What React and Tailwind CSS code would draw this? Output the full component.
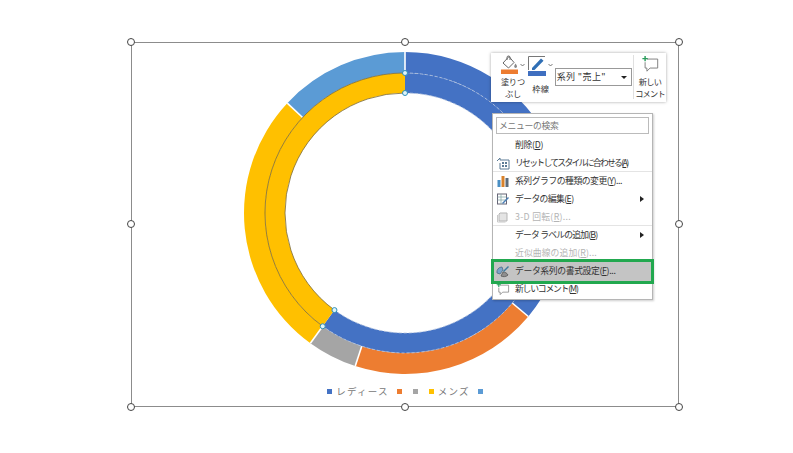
import React from 'react';

const polar = (r, deg) => {
  const a = ((deg - 90) * Math.PI) / 180;
  return [161 + r * Math.cos(a), 161 + r * Math.sin(a)];
};

// donut slice between two radii, angles clockwise from the top
const slice = (r0, r1, from, to) => {
  const [x1, y1] = polar(r1, from);
  const [x2, y2] = polar(r1, to);
  const [x3, y3] = polar(r0, to);
  const [x4, y4] = polar(r0, from);
  const large = to - from > 180 ? 1 : 0;
  return `M${x1} ${y1}A${r1} ${r1} 0 ${large} 1 ${x2} ${y2}L${x3} ${y3}A${r0} ${r0} 0 ${large} 0 ${x4} ${y4}Z`;
};

const arc = (r, from, to) => {
  const [x1, y1] = polar(r, from);
  const [x2, y2] = polar(r, to);
  return `M${x1} ${y1}A${r} ${r} 0 ${to - from > 180 ? 1 : 0} 1 ${x2} ${y2}`;
};

const outer = [
  { from: 0, to: 130, color: '#4472c4' },
  { from: 130, to: 198, color: '#ed7d31' },
  { from: 198, to: 216, color: '#a5a5a5' },
  { from: 216, to: 313, color: '#ffc000' },
  { from: 313, to: 360, color: '#5b9bd5' },
];

const Donut = () => (
  <svg width="322" height="322" viewBox="0 0 322 322" className="overflow-visible">
    {outer.map((s) => (
      <path key={s.from} d={slice(140, 161, s.from, s.to)} fill={s.color} />
    ))}
    {outer.map((s) => {
      const [x1, y1] = polar(140, s.from);
      const [x2, y2] = polar(161, s.from);
      return <line key={s.from} x1={x1} y1={y1} x2={x2} y2={y2} stroke="#fff" strokeWidth="1.6" />;
    })}
    <path d={slice(120, 140, 0, 216)} fill="#4472c4" />
    <path d={slice(120, 140, 216, 360)} fill="#ffc000" />
    <path d={arc(140, 0, 216)} fill="none" stroke="#b9c6de" strokeWidth="0.8" strokeDasharray="3 2" />
    <path d={arc(120, 0, 216)} fill="none" stroke="#b9c6de" strokeWidth="0.8" strokeDasharray="3 2" />
    <path d={arc(140, 216, 360)} fill="none" stroke="#7a6a3a" strokeWidth="0.8" />
    <path d={arc(120, 216, 360)} fill="none" stroke="#7a6a3a" strokeWidth="0.8" />
    {[[140, 0], [120, 0], [140, 216], [120, 216]].map(([r, d]) => {
      const [x, y] = polar(r, d);
      return <circle key={`${r}-${d}`} cx={x} cy={y} r="2.5" fill="#dff3fa" stroke="#2e8fb9" strokeWidth="1" />;
    })}
  </svg>
);

const Handle = ({ className }) => (
  <span className={`absolute w-[8px] h-[8px] rounded-full bg-white border border-[#444] ${className}`} />
);

const LegendItem = ({ color, label }) => (
  <div className="flex items-center gap-[4px]">
    <span className={`w-[5px] h-[5px] ${color}`} />
    {label && <span className="tracking-[1.2px] -mr-[3px]">{label}</span>}
  </div>
);

const Chevron = () => (
  <svg width="5" height="4" viewBox="0 0 5 4" className="shrink-0 mt-[8px]">
    <path d="m.5 1 2 2 2-2" fill="none" stroke="#555" strokeWidth="0.8" />
  </svg>
);

const FillIcon = () => (
  <svg width="20" height="20" viewBox="0 0 20 20">
    <path d="M9 1.500 3 8l5.500 5L14 7.500z" fill="#fff" stroke="#666" strokeWidth="1" />
    <path d="M7 5V2.500a1.500 1.500 0 0 1 3 0V5" fill="none" stroke="#666" strokeWidth="1" />
    <path d="M15.500 8.500c1 1.500 1.500 2.300 1.500 3a1.400 1.400 0 0 1-2.800 0c0-.7.500-1.500 1.300-3z" fill="#888" />
    <rect x="1" y="14.500" width="17" height="4.500" fill="#ed7d31" />
  </svg>
);

const BorderIcon = () => (
  <svg width="20" height="22" viewBox="0 0 20 22">
    <path d="M.5 15V1.500H17" fill="none" stroke="#777" strokeWidth="1" />
    <path d="M4 13 13 3.500l2.500 2.300L6.500 15H4z" fill="#2f6fb5" />
    <rect x="0" y="16" width="18" height="5" fill="#3f6fc0" />
  </svg>
);

const CommentIcon = ({ size = 20 }) => (
  <svg width={size} height={size} viewBox="0 0 20 20">
    <path d="M6 4.500h12v10H9.500L6 18v-3.500H4V8" fill="none" stroke="#777" strokeWidth="1" />
    <path d="M4 1v6M1 4h6" stroke="#2a9d5c" strokeWidth="1.600" />
  </svg>
);

const ResetIcon = () => (
  <svg width="14" height="14" viewBox="0 0 14 14">
    <path d="M1 5 4 2v2h9v9H4V7" fill="none" stroke="#5b7b95" strokeWidth="1" />
    <path d="M6 6h2v2H6zM9 6h2v2H9zM6 9h2v2H6zM9 9h2v2H9z" fill="#5b7b95" />
  </svg>
);

const BarsIcon = () => (
  <svg width="14" height="14" viewBox="0 0 14 14">
    <rect x="1.500" y="6" width="3" height="7" fill="#4a8fc4" />
    <rect x="5.500" y="2" width="3" height="11" fill="#d9822b" />
    <rect x="9.500" y="4" width="3" height="9" fill="#5d6b7a" />
  </svg>
);

const EditIcon = () => (
  <svg width="14" height="14" viewBox="0 0 14 14">
    <rect x="1.500" y="2" width="9" height="10" fill="none" stroke="#667" strokeWidth="1" />
    <path d="M1.500 5h9M1.500 8h9M5 2v10" stroke="#8aa" strokeWidth="0.800" />
    <path d="m6 11 6-6 1 1-6 6z" fill="#4a7fb5" />
  </svg>
);

const RotateIcon = () => (
  <svg width="14" height="14" viewBox="0 0 14 14">
    <path d="M4 3h7v8H3V4z" fill="#e4e4e4" stroke="#b5b5b5" strokeWidth="1" />
    <path d="M1.500 5v7h8" fill="none" stroke="#c8c8c8" strokeWidth="1" />
  </svg>
);

const FormatIcon = () => (
  <svg width="14" height="14" viewBox="0 0 14 14">
    <path d="M1 9a5 5 0 0 1 5-6l1 3-3 4z" fill="#7ba4c9" stroke="#4f6b85" strokeWidth="0.800" />
    <path d="M7 8c2 0 4 1 5 3-2 2-5 2-7 1z" fill="#8f8f8f" stroke="#555" strokeWidth="0.800" />
    <path d="m7 7 5-5 1 1-5 5z" fill="#3f7a9e" />
  </svg>
);

const menuRows = [
  { label: '削除(', key: 'D', end: ')', track: 'tracking-[-0.3px]' },
  { label: 'リセットしてスタイルに合わせる(', key: 'A', end: ')', icon: <ResetIcon />, line: true, track: 'tracking-[-1.7px]' },
  { label: '系列グラフの種類の変更(', key: 'Y', end: ')...', icon: <BarsIcon />, track: 'tracking-[-0.45px]' },
  { label: 'データの編集(', key: 'E', end: ')', icon: <EditIcon />, arrow: true, track: 'tracking-[-0.6px]' },
  { label: '3-D 回転(', key: 'R', end: ')...', icon: <RotateIcon />, off: true, line: true, track: 'tracking-[0.3px]' },
  { label: 'データ ラベルの追加(', key: 'B', end: ')', arrow: true, track: 'tracking-[-0.8px]' },
  { label: '近似曲線の追加(', key: 'R', end: ')...', off: true, track: 'tracking-[0.1px]' },
  { label: 'データ系列の書式設定(', key: 'F', end: ')...', icon: <FormatIcon />, active: true, track: 'tracking-[-0.35px]' },
  { label: '新しいコメント(', key: 'M', end: ')', icon: <CommentIcon size={14} />, track: 'tracking-[-1.2px]' },
];

const MenuRow = ({ row }) => (
  <div
    className={`flex items-center pr-[8px] ${row.off ? 'text-[#b4b4b4]' : 'text-[#333]'} ${
      row.active
        ? 'bg-[#c4c4c4] outline-[3px] outline-[#22a84f] -outline-offset-[1px] relative h-[21px] my-[-1.5px]'
        : 'h-[18px]'
    } ${row.line ? 'border-b border-[#e4e4e4]' : ''}`}
  >
    <span className="w-[19px] mr-[3px] flex justify-center shrink-0">{row.icon}</span>
    <span className={`whitespace-nowrap ${row.track}`}>
      {row.label}
      <span className="underline">{row.key}</span>
      {row.end}
    </span>
    {row.arrow && <span className="ml-auto w-0 h-0 border-y-[3px] border-y-transparent border-l-[4px] border-l-[#222]" />}
  </div>
);

export default function App() {
  return (
    <div className="w-[793px] h-[453px] bg-white relative overflow-hidden font-['Noto_Sans_CJK_JP','Liberation_Sans',sans-serif] pt-[42px] pl-[131px]">
      <div className="relative w-[548px] h-[365px] border border-[#8c8c8c] flex flex-col items-center pt-[9px]">
        <Donut />
        <div className="flex items-center gap-[11px] mt-[10px] text-[9.500px] leading-[14px] text-[#777]">
          <LegendItem color="bg-[#4472c4]" label="レディース" />
          <LegendItem color="bg-[#ed7d31]" />
          <LegendItem color="bg-[#a5a5a5]" />
          <LegendItem color="bg-[#ffc000]" label="メンズ" />
          <LegendItem color="bg-[#5b9bd5]" />
        </div>
        <Handle className="-left-[5px] -top-[5px]" />
        <Handle className="left-[269px] -top-[5px]" />
        <Handle className="-right-[5px] -top-[5px]" />
        <Handle className="-left-[5px] top-[177px]" />
        <Handle className="-right-[5px] top-[177px]" />
        <Handle className="-left-[5px] -bottom-[5px]" />
        <Handle className="left-[269px] -bottom-[5px]" />
        <Handle className="-right-[5px] -bottom-[5px]" />
      </div>

      {/* mini toolbar */}
      <div className="absolute left-[491px] top-[53px] w-[175px] h-[49px] bg-white shadow-[0_0_3px_rgba(0,0,0,0.35)] flex text-[8.200px] leading-[12px] text-[#333] pl-[7px] pt-[2px]">
        <div className="w-[30px] flex flex-col items-center">
          <div className="flex">
            <FillIcon />
            <Chevron />
          </div>
          <span className="text-center tracking-[-0.2px] whitespace-nowrap">塗りつ<br />ぶし</span>
        </div>
        <div className="w-[26px] flex flex-col items-center">
          <div className="flex">
            <BorderIcon />
            <Chevron />
          </div>
          <span className="mt-[5px] whitespace-nowrap tracking-[0.4px]">枠線</span>
        </div>
        <div className="w-[78px] h-[18px] mt-[13px] ml-[1px] border border-[#999] flex items-center justify-between pl-[1px] pr-[4px] whitespace-nowrap text-[9px]">
          <span className="tracking-[0.4px]">系列 "売上"</span>
          <span className="w-0 h-0 border-x-[3px] border-x-transparent border-t-[3px] border-t-[#222]" />
        </div>
        <div className="w-[33px] flex flex-col items-center border-l border-[#e0e0e0] mb-[3px] ml-[1px]">
          <CommentIcon size={19} />
          <span className="text-center mt-[2px] tracking-[-0.7px] whitespace-nowrap">新しい<br />コメント</span>
        </div>
      </div>

      {/* context menu */}
      <div className="absolute left-[492px] top-[113px] w-[161px] h-[187px] bg-white border border-[#b5b5b5] shadow-[1px_1px_2px_rgba(0,0,0,0.2)] text-[8.800px]">
        <div className="mx-[3px] mt-[3px] h-[17px] border border-[#bbb] flex items-center px-[2px] text-[#777] tracking-[-0.3px]">メニューの検索</div>
        <div className="mt-[2px]">
          {menuRows.map((row) => (
            <MenuRow key={row.label} row={row} />
          ))}
        </div>
      </div>
    </div>
  );
}
